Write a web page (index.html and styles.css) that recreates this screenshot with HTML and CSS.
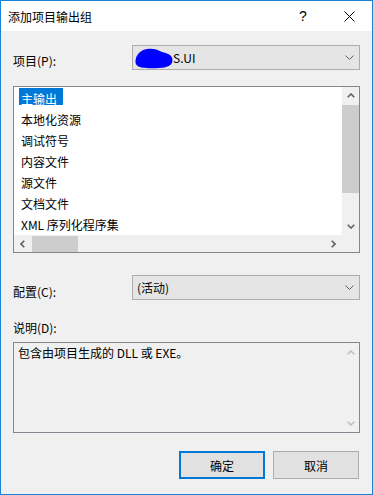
FILE: index.html
```html
<!DOCTYPE html>
<html lang="zh-CN">
<head>
<meta charset="utf-8">
<title>添加项目输出组</title>
<link rel="stylesheet" href="styles.css">
</head>
<body>
<div class="window">
  <div class="titlebar">
    <span class="title">添加项目输出组</span>
    <span class="tb-btn help">?</span>
    <span class="tb-btn close"><svg width="11" height="11" viewBox="0 0 11 11"><path d="M0.5 0.5L10.5 10.5M10.5 0.5L0.5 10.5" stroke="#000" stroke-width="1" fill="none"/></svg></span>
  </div>
  <div class="client">
    <div class="row">
      <span class="lbl">项目(P):</span>
      <div class="combo combo-project">
        <span class="combo-val"><svg class="blob" width="38" height="21" viewBox="0 0 38 21"><path d="M0.5,13 C1,6 6,2 12,1 C17,0 22,1 27,4 C32,5 37.5,7 37.5,12 C37.5,18 32,19.5 24,20 C15,20.5 5,20.5 2,17.5 C0.5,16 0.3,14 0.5,13Z" fill="#0000ff"/></svg>S.UI</span>
        <svg class="chev" width="9" height="5" viewBox="0 0 9 5"><polyline points="0.5,0.5 4.5,4.5 8.5,0.5" fill="none" stroke="#606060" stroke-width="1"/></svg>
      </div>
    </div>

    <div class="listbox">
      <div class="lb-main">
        <div class="lb-items">
          <div class="item"><span class="txt sel">主输出</span></div>
          <div class="item"><span class="txt">本地化资源</span></div>
          <div class="item"><span class="txt">调试符号</span></div>
          <div class="item"><span class="txt">内容文件</span></div>
          <div class="item"><span class="txt">源文件</span></div>
          <div class="item"><span class="txt">文档文件</span></div>
          <div class="item"><span class="txt">XML 序列化程序集</span></div>
        </div>
        <div class="vscroll">
          <div class="sb-btn"><svg width="8" height="5" viewBox="0 0 8 5"><polyline points="0.7,4.3 4,1 7.3,4.3" fill="none" stroke="#606060" stroke-width="1.6"/></svg></div>
          <div class="sb-track"><div class="vthumb"></div></div>
          <div class="sb-btn"><svg width="8" height="5" viewBox="0 0 8 5"><polyline points="0.7,0.7 4,4 7.3,0.7" fill="none" stroke="#606060" stroke-width="1.6"/></svg></div>
        </div>
      </div>
      <div class="lb-bottom">
        <div class="hscroll">
          <div class="sb-btn"><svg width="5" height="8" viewBox="0 0 5 8"><polyline points="4.3,0.7 1,4 4.3,7.3" fill="none" stroke="#606060" stroke-width="1.6"/></svg></div>
          <div class="sb-htrack"><div class="hthumb"></div></div>
          <div class="sb-btn"><svg width="5" height="8" viewBox="0 0 5 8"><polyline points="0.7,0.7 4,4 0.7,7.3" fill="none" stroke="#606060" stroke-width="1.6"/></svg></div>
        </div>
        <div class="corner"></div>
      </div>
    </div>

    <div class="row row-config">
      <span class="lbl lbl-config">配置(C):</span>
      <div class="combo">
        <span class="combo-val">(活动)</span>
        <svg class="chev" width="9" height="5" viewBox="0 0 9 5"><polyline points="0.5,0.5 4.5,4.5 8.5,0.5" fill="none" stroke="#606060" stroke-width="1"/></svg>
      </div>
    </div>

    <div class="desc-lbl">说明(D):</div>
    <div class="descbox">
      <div class="desc-text">包含由项目生成的 DLL 或 EXE。</div>
      <div class="vscroll vscroll-off">
        <div class="sb-btn"><svg width="8" height="5" viewBox="0 0 8 5"><polyline points="0.7,4.3 4,1 7.3,4.3" fill="none" stroke="#bfbfbf" stroke-width="1.6"/></svg></div>
        <div class="sb-track"></div>
        <div class="sb-btn"><svg width="8" height="5" viewBox="0 0 8 5"><polyline points="0.7,0.7 4,4 7.3,0.7" fill="none" stroke="#bfbfbf" stroke-width="1.6"/></svg></div>
      </div>
    </div>

    <div class="buttons">
      <div class="btn btn-default">确定</div>
      <div class="btn">取消</div>
    </div>
  </div>
</div>
</body>
</html>
```
FILE: styles.css
```css
* { box-sizing: border-box; }
html, body { margin: 0; padding: 0; }
body {
  width: 373px;
  height: 495px;
  overflow: hidden;
  font-family: "Noto Sans CJK SC", "Microsoft YaHei", sans-serif;
  font-size: 12px;
  color: #000;
  background: #f0f0f0;
}
.window {
  width: 373px;
  height: 495px;
  border: 1px solid #1883d7;
  display: flex;
  flex-direction: column;
  background: #f0f0f0;
}
.titlebar {
  height: 30px;
  flex: none;
  background: #fff;
  display: flex;
  align-items: center;
}
.title {
  flex: 1;
  padding-left: 7px;
  line-height: 17px;
}
.tb-btn {
  width: 46px;
  height: 30px;
  display: flex;
  align-items: center;
  justify-content: center;
}
.help {
  font-family: "Liberation Sans", sans-serif;
  font-size: 14px;
  padding-bottom: 1px;
}
.close svg { margin-left: 1px; }

.client {
  flex: 1;
  padding: 14px 12px 0 12px;
  display: flex;
  flex-direction: column;
}
.row {
  display: flex;
  height: 25px;
  flex: none;
}
.row-config { margin-top: 22px; }
.lbl {
  width: 119px;
  padding-top: 7px;
  line-height: 17px;
}
.lbl-config { padding-top: 8px; }
.combo {
  width: 228px;
  height: 25px;
  border: 1px solid #adadad;
  background: #e5e5e5;
  display: flex;
  align-items: center;
  padding: 0 5px 0 4px;
}
.combo-project { padding-left: 2px; }
.combo-val {
  flex: 1;
  line-height: 17px;
  display: flex;
  align-items: center;
}
.blob { display: block; margin-top: 1px; }
.chev { display: block; }

.listbox {
  margin-top: 16px;
  height: 167px;
  flex: none;
  border: 1px solid #828790;
  display: flex;
  flex-direction: column;
}
.lb-main {
  height: 148px;
  display: flex;
}
.lb-items {
  flex: 1;
  background: #fff;
  padding-top: 1px;
}
.item {
  height: 21px;
  display: flex;
  align-items: flex-start;
  padding-left: 5px;
}
.txt {
  height: 17px;
  line-height: 21px;
  padding: 0 6px 0 2px;
  white-space: nowrap;
}
.sel {
  background: #0078d7;
  color: #fff;
}
.vscroll {
  width: 17px;
  flex: none;
  background: #f0f0f0;
  display: flex;
  flex-direction: column;
}
.sb-btn {
  width: 17px;
  height: 17px;
  flex: none;
  display: flex;
  align-items: center;
  justify-content: center;
}
.sb-btn svg { display: block; }
.sb-track { flex: 1; }
.vthumb {
  margin-top: 1px;
  height: 88px;
  background: #cdcdcd;
}
.lb-bottom {
  height: 17px;
  display: flex;
}
.hscroll {
  flex: 1;
  display: flex;
  background: #f0f0f0;
}
.sb-htrack { flex: 1; display: flex; }
.hthumb {
  margin: 1px 0 0 1px;
  width: 46px;
  background: #cdcdcd;
}
.corner {
  width: 17px;
  background: #f0f0f0;
}

.desc-lbl {
  margin-top: 19px;
  line-height: 17px;
  height: 17px;
  flex: none;
}
.descbox {
  margin-top: 6px;
  height: 91px;
  flex: none;
  border: 1px solid #828790;
  display: flex;
  background: #f0f0f0;
}
.desc-text {
  flex: 1;
  padding: 1px 4px;
  line-height: 17px;
}
.vscroll-off .sb-btn:first-child { margin-top: 1px; }

.buttons {
  margin-top: 18px;
  display: flex;
  justify-content: flex-end;
  gap: 8px;
  padding-right: 1px;
  flex: none;
}
.btn {
  width: 86px;
  height: 28px;
  border: 1px solid #adadad;
  background: #e1e1e1;
  display: flex;
  align-items: center;
  justify-content: center;
  line-height: 17px;
}
.btn-default {
  border: 2px solid #0078d7;
}
```
